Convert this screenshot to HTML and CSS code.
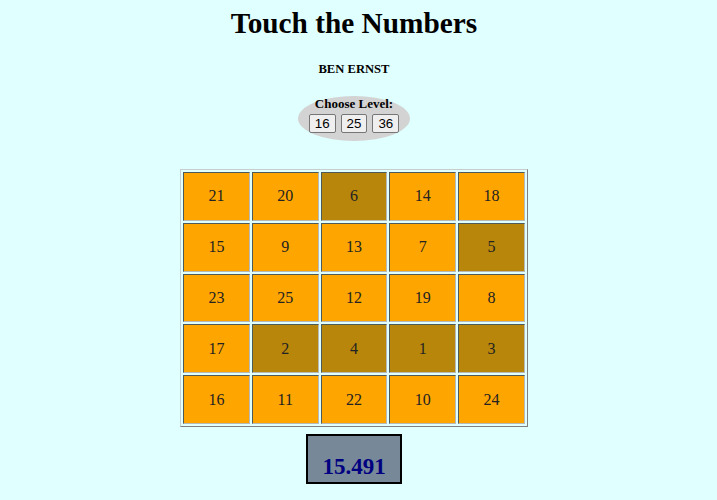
FILE: index.html
```html
<!DOCTYPE html>
<html>
<head>
<meta charset="utf-8">
<title>Touch the Numbers</title>
<link rel="stylesheet" href="styles.css">
</head>
<body>
<h1 class="title">Touch the Numbers</h1>
<h5 class="author">BEN ERNST</h5>
<div class="level">
  <div class="level-label">Choose Level:</div>
  <div class="level-buttons">
    <button class="lvl">16</button>
    <button class="lvl">25</button>
    <button class="lvl">36</button>
  </div>
</div>
<table class="board">
  <tr><td>21</td><td>20</td><td class="done">6</td><td>14</td><td>18</td></tr>
  <tr><td>15</td><td>9</td><td>13</td><td>7</td><td class="done">5</td></tr>
  <tr><td>23</td><td>25</td><td>12</td><td>19</td><td>8</td></tr>
  <tr><td>17</td><td class="done">2</td><td class="done">4</td><td class="done">1</td><td class="done">3</td></tr>
  <tr><td>16</td><td>11</td><td>22</td><td>10</td><td>24</td></tr>
</table>
<div class="timer">15.491</div>
</body>
</html>
```
FILE: styles.css
```css
html, body {
  background: #e0ffff;
}
body {
  margin: 0;
  padding: 0 17px 0 8px;
  font-family: "Liberation Serif", "Times New Roman", serif;
  color: #000;
  display: flex;
  flex-direction: column;
  align-items: center;
}
.title {
  font-size: 29.3px;
  font-weight: bold;
  margin: 5px 0 0;
  line-height: 36px;
}
.author {
  font-size: 12.6px;
  font-weight: bold;
  margin: 21px 0 0;
  line-height: 15px;
}
.level {
  margin-top: 19px;
  width: 112px;
  height: 45px;
  background: #d3d3d3;
  border-radius: 50%;
  display: flex;
  flex-direction: column;
  align-items: center;
  box-sizing: border-box;
  padding-top: 0;
}
.level-label {
  font-size: 13px;
  font-weight: bold;
  line-height: 15px;
}
.level-buttons {
  display: flex;
  gap: 5px;
  margin-top: 3px;
}
.lvl {
  font-family: "Liberation Sans", Arial, sans-serif;
  font-size: 13.33px;
  height: 19px;
  padding: 0 5px;
  background: #efefef;
  border: 1px solid #767676;
  border-radius: 2px;
  color: #000;
  line-height: 15px;
}
.board {
  margin-top: 28px;
  border-collapse: separate;
  border-spacing: 2px;
  border-width: 1px;
  border-style: solid;
  border-color: #c8cdcd #808080 #808080 #c8cdcd;
}
.board td {
  box-sizing: border-box;
  width: 66.8px;
  height: 48.8px;
  padding: 0;
  text-align: center;
  vertical-align: middle;
  font-size: 16px;
  color: #222;
  background: #ffa500;
  border-width: 1px;
  border-style: solid;
  border-color: #4d5a5a #b8b8b8 #b8b8b8 #4d5a5a;
}
.board td.done {
  background: #b8860b;
}
.timer {
  margin-top: 7px;
  width: 96px;
  height: 50px;
  box-sizing: border-box;
  border: 2px solid #000;
  background: #778899;
  color: #000080;
  font-weight: bold;
  font-size: 23px;
  text-align: center;
  padding-top: 18px;
  line-height: 26px;
}
```
